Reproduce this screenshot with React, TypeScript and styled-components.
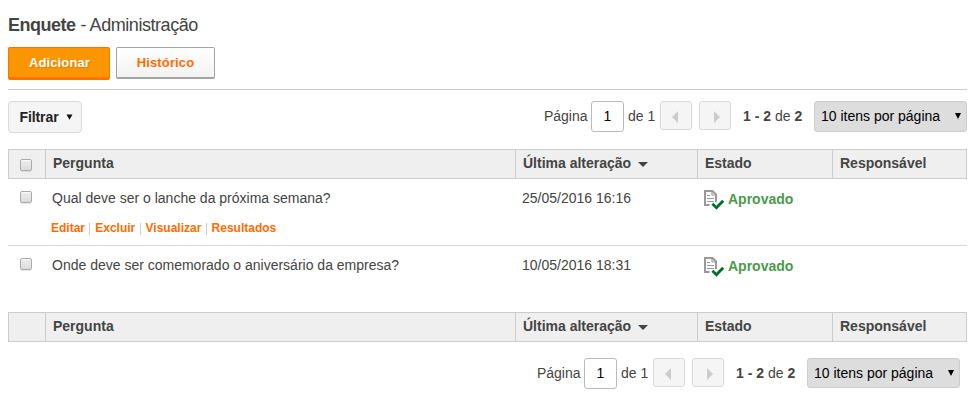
import React from 'react';
import styled, { createGlobalStyle, css } from 'styled-components';

const GlobalStyle = createGlobalStyle`
  *, *::before, *::after { box-sizing: border-box; }
  body {
    margin: 0;
    background: #fff;
    color: #444;
    font: 14px/20px "Liberation Sans", Arial, sans-serif;
  }
`;

const Page = styled.main`
  width: 975px;
  padding: 15px 8px 0;
`;

const Title = styled.h1`
  margin: 0;
  height: 32px;
  font-size: 18px;
  line-height: 20px;
  font-weight: 400;
  letter-spacing: -0.45px;
  b {
    margin-right: 0.6px;
    letter-spacing: -0.52px;
  }
`;

const Actions = styled.div`
  display: flex;
  gap: 6px;
  height: 43px;
  border-bottom: 1px solid #ccc;
`;

const ActionButton = styled.button<{ $primary?: boolean }>`
  width: 99px;
  height: 32px;
  padding: 0;
  border: 1px solid #a3a3a3;
  border-bottom-width: 2px;
  border-radius: 2px;
  background: linear-gradient(#fff, #f3f3f3);
  color: #ff6c00;
  font: bold 13px/28px "Liberation Sans", Arial, sans-serif;
  letter-spacing: 0.12px;
  ${({ $primary }) => $primary && css`
    width: 102px;
    height: 33px;
    padding-left: 1px;
    border-color: #ff7200;
    border-bottom-width: 3px;
    background: #fb9600;
    color: #fff;
    text-shadow: 1px 1px 1px rgba(130, 70, 0, 0.3);
  `}
`;

const Toolbar = styled.div`
  display: flex;
  justify-content: space-between;
  height: 59px;
  padding-top: 11px;
`;

const FilterButton = styled.button`
  display: flex;
  align-items: center;
  gap: 7.5px;
  width: 74px;
  height: 32px;
  padding: 0 0 0 10.5px;
  border: 1px solid #d9d9d9;
  border-radius: 4px;
  background: #f5f5f5;
  color: #222;
  font: bold 14px/20px "Liberation Sans", Arial, sans-serif;
  letter-spacing: -0.1px;
`;

const PagerBar = styled.div`
  display: flex;
  align-items: flex-start;
  line-height: 30px;
  white-space: pre;
`;

const PageInput = styled.input`
  width: 33px;
  height: 31px;
  margin: 0 4px 0 3.5px;
  padding: 0 0 2px;
  border: 1px solid #bbb;
  border-radius: 3px;
  background: #fff;
  color: #000;
  font: 14px "Liberation Sans", Arial, sans-serif;
  text-align: center;
`;

const PageTotal = styled.span`
  width: 32px;
`;

const StepButton = styled.button`
  display: flex;
  align-items: center;
  justify-content: center;
  width: 32px;
  height: 29px;
  margin-right: 7px;
  padding: 3px 0 0;
  border: 1px solid #d9d9d9;
  border-radius: 3px;
  background: #f5f5f5;
`;

const Range = styled.span`
  width: 71px;
  margin-left: 5px;
`;

const SizePicker = styled.button<{ $height: number }>`
  display: flex;
  align-items: flex-start;
  justify-content: space-between;
  width: 153px;
  height: ${({ $height }) => $height}px;
  padding: 0 5px 0 6px;
  border: 1px solid #ccc;
  border-radius: 3px;
  background: #ddd;
  color: #000;
  font: 14px/28px "Liberation Sans", Arial, sans-serif;
`;

const columns = css`
  display: grid;
  grid-template-columns: 37px 470px 182px 135px 135px;
`;

const HeaderRow = styled.div`
  ${columns}
  height: 30px;
  border: solid #ccc;
  border-width: 1px 1px 1px 0;
  background: #efefef;
  font-weight: bold;
`;

const HeaderCell = styled.div`
  display: flex;
  align-items: flex-start;
  gap: 7px;
  padding: 3px 0 0 7px;
  border-left: 1px solid #ccc;
`;

const DataRow = styled.div<{ $divided?: boolean }>`
  ${columns}
  height: ${({ $divided }) => ($divided ? 67 : 66)}px;
  border-bottom: ${({ $divided }) => ($divided ? '1px solid #d9d9d9' : '0')};
`;

const Cell = styled.div`
  padding: 9px 0 0 7px;
`;

const CheckCell = styled.div<{ $top: number }>`
  padding: ${({ $top }) => $top}px 0 0 12px;
`;

const HeadCheckCell = styled(CheckCell)`
  border-left: 1px solid #ccc;
  padding-left: 11px;
`;

const Checkbox = styled.input.attrs({ type: 'checkbox' })`
  appearance: none;
  display: block;
  width: 12px;
  height: 12px;
  margin: 0;
  border: 1px solid #aaa;
  border-radius: 2px;
  background: linear-gradient(#ededed, #dcdcdc);
  box-shadow: 0 1px 0 rgba(0, 0, 0, 0.08), inset 0 1px 1px rgba(255, 255, 255, 0.7);
`;

const RowActions = styled.nav`
  display: flex;
  margin: 11px 0 0 -1px;
  font-size: 12px;
  line-height: 18px;
`;

const RowLink = styled.a`
  color: #ff6c00;
  font-weight: bold;
  & + &::before {
    content: "";
    display: inline-block;
    width: 1px;
    height: 12px;
    margin: 0 5px 0 4.25px;
    background: #ccc;
    vertical-align: -3px;
  }
`;

const StatusCell = styled.div`
  display: flex;
  align-items: flex-start;
  gap: 3px;
  padding: 10px 0 0 7px;
  color: #4b9a4b;
  font-weight: bold;
`;

const BottomPager = styled.div`
  display: flex;
  justify-content: flex-end;
  padding: 16px 7px 0 0;
`;

const DownArrow = () => (
  <svg width="7" height="6" viewBox="0 0 7 6"><path d="M.5 .5h6L3.5 5.8z" fill="#111" /></svg>
);

const SelectArrow = () => (
  <svg width="6" height="28" viewBox="0 0 6 28"><path d="M0 11h6L3 17z" fill="#000" /></svg>
);

const SortArrow = () => (
  <svg width="10" height="20" viewBox="0 0 10 20"><path d="M0 9h10L5 14z" fill="#444" /></svg>
);

const StepArrow = ({ back }: { back?: boolean }) => (
  <svg width="10" height="12" viewBox="0 0 10 12">
    <path d={back ? 'M7 0v12L1 6z' : 'M4 0v12L10 6z'} fill="#ccc" />
  </svg>
);

const ApprovedIcon = () => (
  <svg width="21" height="22" viewBox="0 0 21 22" fill="none">
    <path d="M5.5 16H1V2h7.5L12 5.5V13" stroke="#999" strokeWidth="2" />
    <path d="M8 2v4h4" stroke="#999" strokeWidth="1.2" />
    <path d="M3 6.5h3M3 9.5h7M3 12.5h7" stroke="#999" />
    <path d="m7.8 14.5 4.2 4.2 7-7.2" stroke="#fff" strokeWidth="4.8" />
    <path d="m8.4 14.8 4 4 6.8-7.1" stroke="#00722e" strokeWidth="2.9" />
  </svg>
);

const Pager = ({ selectHeight = 31 }: { selectHeight?: number }) => (
  <PagerBar>
    <span>Página</span>
    <PageInput defaultValue="1" aria-label="Página" />
    <PageTotal>de 1</PageTotal>
    <StepButton aria-label="Anterior"><StepArrow back /></StepButton>
    <StepButton aria-label="Próxima"><StepArrow /></StepButton>
    <Range><b>1 - 2</b> de <b>2</b></Range>
    <SizePicker $height={selectHeight}>10 itens por página<SelectArrow /></SizePicker>
  </PagerBar>
);

const TableHeader = ({ selectable }: { selectable?: boolean }) => (
  <HeaderRow>
    <HeadCheckCell $top={9}>{selectable && <Checkbox aria-label="Selecionar tudo" />}</HeadCheckCell>
    <HeaderCell>Pergunta</HeaderCell>
    <HeaderCell>Última alteração<SortArrow /></HeaderCell>
    <HeaderCell>Estado</HeaderCell>
    <HeaderCell>Responsável</HeaderCell>
  </HeaderRow>
);

const polls = [
  {
    question: 'Qual deve ser o lanche da próxima semana?',
    changed: '25/05/2016 16:16',
    actions: ['Editar', 'Excluir', 'Visualizar', 'Resultados'],
  },
  {
    question: 'Onde deve ser comemorado o aniversário da empresa?',
    changed: '10/05/2016 18:31',
    actions: [],
  },
];

export default function App() {
  return (
    <>
      <GlobalStyle />
      <Page>
        <Title><b>Enquete</b> - Administração</Title>
        <Actions>
          <ActionButton $primary>Adicionar</ActionButton>
          <ActionButton>Histórico</ActionButton>
        </Actions>
        <Toolbar>
          <FilterButton>Filtrar<DownArrow /></FilterButton>
          <Pager />
        </Toolbar>
        <TableHeader selectable />
        {polls.map((poll, i) => (
          <DataRow key={poll.question} $divided={i < polls.length - 1}>
            <CheckCell $top={12}><Checkbox aria-label={poll.question} /></CheckCell>
            <Cell>
              {poll.question}
              {poll.actions.length > 0 && (
                <RowActions>
                  {poll.actions.map((action) => <RowLink key={action}>{action}</RowLink>)}
                </RowActions>
              )}
            </Cell>
            <Cell>{poll.changed}</Cell>
            <StatusCell><ApprovedIcon />Aprovado</StatusCell>
          </DataRow>
        ))}
        <TableHeader />
        <BottomPager><Pager selectHeight={30} /></BottomPager>
      </Page>
    </>
  );
}
